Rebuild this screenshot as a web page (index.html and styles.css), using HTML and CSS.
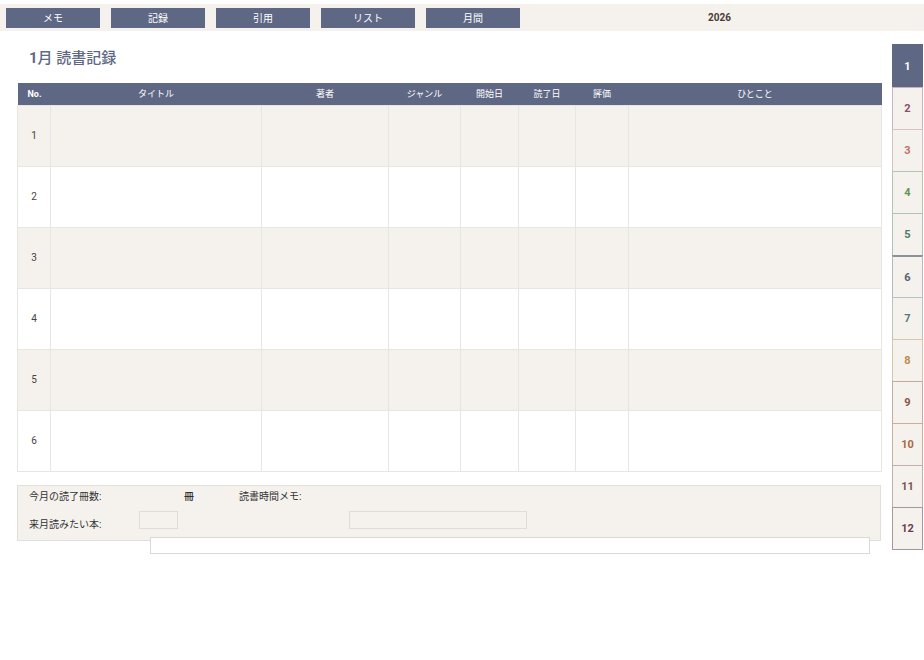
FILE: index.html
```html
<!DOCTYPE html>
<html lang="ja">
<head>
<meta charset="utf-8">
<title>1月 読書記録</title>
<link rel="stylesheet" href="styles.css">
</head>
<body>
<div class="topbar">
  <div class="navbtn">メモ</div>
  <div class="navbtn">記録</div>
  <div class="navbtn">引用</div>
  <div class="navbtn">リスト</div>
  <div class="navbtn">月間</div>
  <div class="year">2026</div>
</div>
<div class="content">
  <div class="main">
    <h1 class="title"><span class="month">1</span>月 読書記録</h1>
    <table class="log">
      <thead>
        <tr>
          <th class="c-no">No.</th>
          <th class="c-title">タイトル</th>
          <th class="c-author">著者</th>
          <th class="c-genre">ジャンル</th>
          <th class="c-start">開始日</th>
          <th class="c-end">読了日</th>
          <th class="c-rate">評価</th>
          <th class="c-note">ひとこと</th>
        </tr>
      </thead>
      <tbody>
        <tr class="odd"><td>1</td><td></td><td></td><td></td><td></td><td></td><td></td><td></td></tr>
        <tr><td>2</td><td></td><td></td><td></td><td></td><td></td><td></td><td></td></tr>
        <tr class="odd"><td>3</td><td></td><td></td><td></td><td></td><td></td><td></td><td></td></tr>
        <tr><td>4</td><td></td><td></td><td></td><td></td><td></td><td></td><td></td></tr>
        <tr class="odd"><td>5</td><td></td><td></td><td></td><td></td><td></td><td></td><td></td></tr>
        <tr><td>6</td><td></td><td></td><td></td><td></td><td></td><td></td><td></td></tr>
      </tbody>
    </table>
    <div class="summary">
      <div class="lbl r1 k1">今月の読了冊数:</div>
      <div class="unit r1">冊</div>
      <div class="lbl r1 k4">読書時間メモ:</div>
      <div class="lbl r2 k1">来月読みたい本:</div>
      <div class="field r2 k2"></div>
      <div class="field r2 k5"></div>
      <div class="memo"></div>
    </div>
  </div>
  <div class="tabs">
    <div class="tab t1">1</div>
    <div class="tab t2">2</div>
    <div class="tab t3">3</div>
    <div class="tab t4">4</div>
    <div class="tab t5">5</div>
    <div class="tab t6">6</div>
    <div class="tab t7">7</div>
    <div class="tab t8">8</div>
    <div class="tab t9">9</div>
    <div class="tab t10">10</div>
    <div class="tab t11">11</div>
    <div class="tab t12">12</div>
  </div>
</div>
</body>
</html>
```

FILE: styles.css
```css
* { box-sizing: border-box; }
html, body { margin: 0; padding: 0; background: #ffffff; }
body {
  font-family: Roboto, "Noto Sans CJK JP", sans-serif;
  color: #333;
  width: 924px;
  height: 660px;
  overflow: hidden;
}
.topbar {
  margin-top: 4px;
  height: 27px;
  background: #f5f2ee;
  display: flex;
  align-items: center;
  padding: 0 16px 0 6px;
  gap: 11px;
}
.navbtn {
  width: 94px;
  height: 20px;
  background: #5e6884;
  color: #fff;
  font-size: 10px;
  display: flex;
  align-items: center;
  justify-content: center;
}
.year {
  flex: 1;
  text-align: center;
  font-size: 10px;
  font-weight: 700;
  color: #4a3b35;
}
.content {
  display: flex;
  align-items: flex-start;
}
.main {
  margin-left: 17px;
  width: 864px;
}
.title {
  margin: 15px 0 13px 12px;
  height: 24px;
  line-height: 24px;
  font-size: 15px;
  font-weight: 500;
  color: #5e6884;
}
.title .month { font-weight: 700; }
.log {
  width: 864px;
  border-collapse: collapse;
  table-layout: fixed;
}
.log th {
  background: #5e6884;
  color: #fff;
  font-size: 9px;
  font-weight: 400;
  height: 22px;
  padding: 0;
  text-align: center;
}
.log th.c-no { text-align: left; padding-left: 10px; font-weight: 700; }
.c-no { width: 33px; }
.c-title { width: 211px; }
.c-author { width: 127px; }
.c-genre { width: 72px; }
.c-start { width: 58px; }
.c-end { width: 57px; }
.c-rate { width: 53px; }
.c-note { width: 253px; }
.log td {
  height: 61px;
  padding: 0;
  border: 1px solid #e8e6e3;
  font-size: 10px;
  color: #444;
  text-align: center;
}
.log tr.odd td { background: #f5f2ee; }
.summary {
  margin-top: 13px;
  height: 56px;
  background: #f5f2ee;
  border: 1px solid #e2ded9;
  padding: 4px 0 0 11px;
  display: grid;
  grid-template-columns: 110px 39px 61px 110px 178px 1fr;
  grid-template-rows: 14px 18px 17px;
  row-gap: 7px;
}
.lbl, .unit {
  font-size: 10px;
  color: #333;
  line-height: 14px;
}
.r1 { grid-row: 1; align-self: center; }
.r2 { grid-row: 2; }
.r2.lbl { align-self: end; line-height: 12px; margin-bottom: -2px; }
.k1 { grid-column: 1; }
.k2 { grid-column: 2; }
.k4 { grid-column: 4; }
.k5 { grid-column: 5; }
.unit { grid-column: 3; padding-left: 6px; color: #2e2e2e; font-weight: 500; }
.field {
  background: #f5f2ee;
  border: 1px solid #e0dcd7;
}
.memo {
  grid-row: 3;
  grid-column: 1 / -1;
  margin-left: 121px;
  margin-top: 1px;
  width: 720px;
  height: 17px;
  background: #fff;
  border: 1px solid #dcd9d5;
}
.tabs {
  margin-left: 11px;
  margin-top: 13px;
  width: 31px;
  display: flex;
  flex-direction: column;
}
.tab {
  height: 42px;
  display: flex;
  align-items: center;
  justify-content: center;
  font-size: 11px;
  font-weight: 700;
  background: #f5f2ee;
  border: 1px solid #c8bfc3;
  border-bottom: none;
}
.tab.t12 { border-bottom: 1px solid #a8959e; height: 43px; }
.tab.t1 { background: #5e6884; color: #fff; border-color: #5e6884; height: 43px; }
.t2 { color: #8a5068; border-color: #c9b2bb; }
.t3 { color: #c46d6b; border-color: #dcc0bf; }
.t4 { color: #5f9556; border-color: #b3c6b0; }
.t5 { color: #4d7a67; border-color: #b0c3bb; }
.t6 { color: #5a6070; border-color: #b5b8c0; border-top: 2px solid #8a909c; }
.t7 { color: #4f7a80; border-color: #b1c4c6; }
.t8 { color: #bf8a52; border-color: #dcc4a6; }
.t9 { color: #8a5243; border-color: #c6aaa0; }
.t10 { color: #a76a46; border-color: #cfae98; }
.t11 { color: #7a5553; border-color: #c2b0ae; }
.t12 { color: #6b3d52; border-color: #a8959e; }
```
